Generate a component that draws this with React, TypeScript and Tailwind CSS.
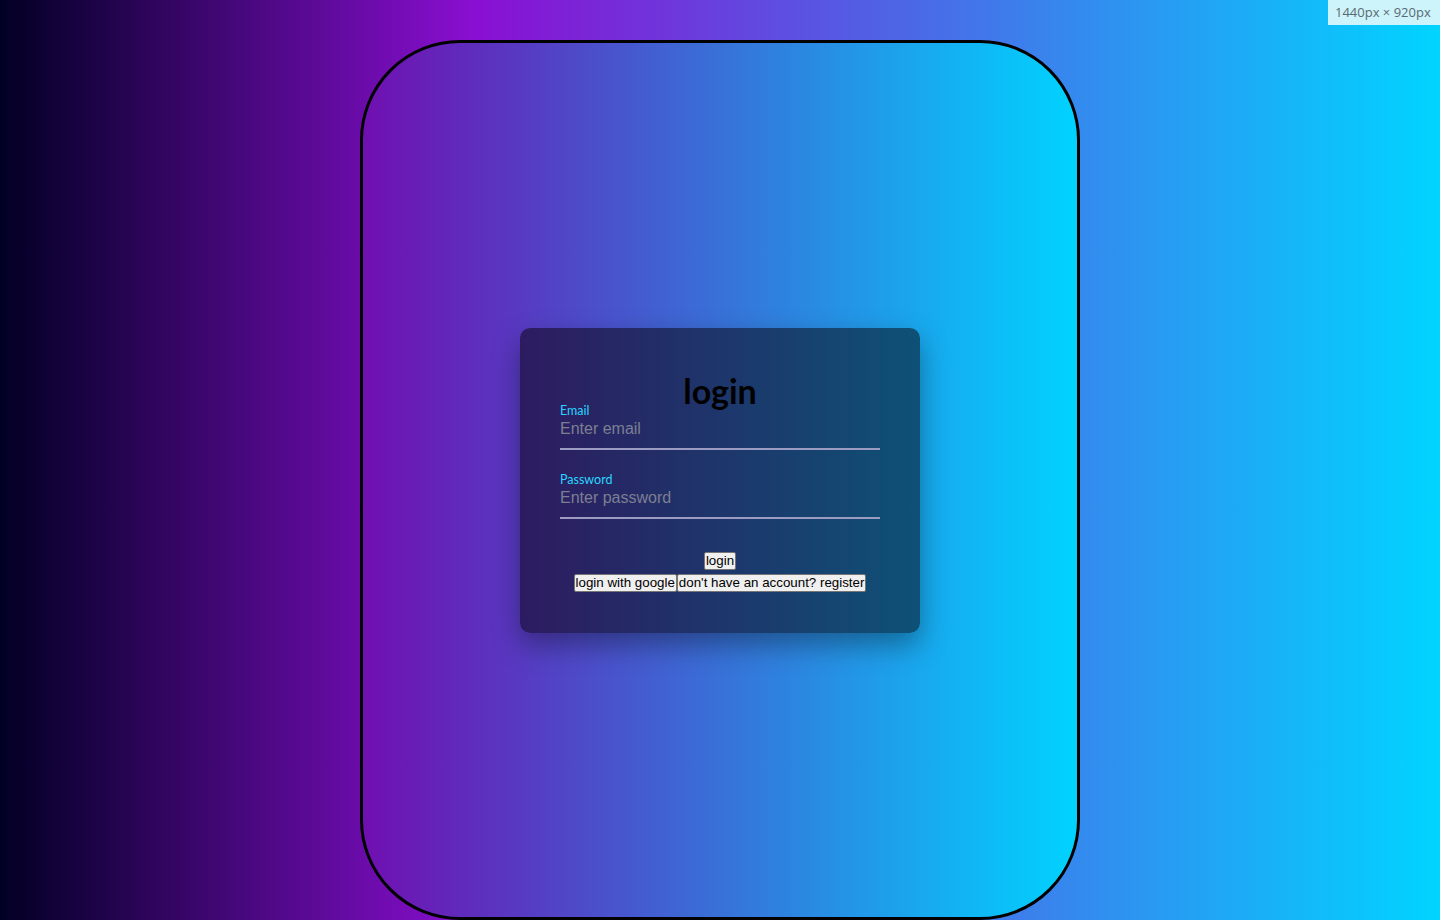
export default function App() {
  return (
    <div className="relative h-[920px] w-[1440px] overflow-hidden bg-[linear-gradient(90deg,#020024_0%,#8a0fd2_33%,#00d4ff_100%)] font-['Open_Sans',sans-serif]">
      <div className="mx-auto mt-[40px] flex h-[880px] w-[720px] items-center justify-center rounded-[100px] border-[3px] border-black bg-[linear-gradient(90deg,#700fb1_0%,#00d3ff_100%)]">
        <div className="flex w-[400px] flex-col rounded-[10px] bg-[linear-gradient(90deg,#2d1b60_0%,#0e5176_100%)] px-[40px] pb-[41px] pt-[45px] shadow-[0_12px_28px_rgba(0,0,0,0.35)]">
          <h1 className="mb-[-6px] text-center font-['Lato',sans-serif] text-[34px] font-bold leading-[36px] text-black">
            login
          </h1>

          <label className="font-['Lato',sans-serif] text-[12.5px] leading-[15px] text-[#2ad6ff]">Email</label>
          <input
            type="text"
            placeholder="Enter email"
            className="h-[32px] border-b-2 border-[#9c9cc2] bg-transparent pb-[7px] font-['Liberation_Sans',sans-serif] text-[16px] text-white outline-none placeholder:text-[#7c7f92]"
          />

          <label className="mt-[22px] font-['Lato',sans-serif] text-[12.5px] leading-[15px] text-[#2ad6ff]">Password</label>
          <input
            type="password"
            placeholder="Enter password"
            className="h-[32px] border-b-2 border-[#9c9cc2] bg-transparent pb-[7px] font-['Liberation_Sans',sans-serif] text-[16px] text-white outline-none placeholder:text-[#7c7f92]"
          />

          <div className="mt-[33px] flex flex-col items-center gap-[4px] font-['Liberation_Sans',sans-serif] text-[13.33px] leading-[16px] text-black">
            <button className="rounded-[2px] border border-[#767676] bg-[#f0f0f0] px-[1px]">login</button>
            <div className="flex">
              <button className="rounded-[2px] border border-[#767676] bg-[#f0f0f0] px-[1px]">login with google</button>
              <button className="rounded-[2px] border border-[#767676] bg-[#f0f0f0] px-[1px]">don't have an account? register</button>
            </div>
          </div>
        </div>
      </div>

      <div className="absolute right-0 top-0 h-[25px] w-[112px] bg-[#cdf3fb] pl-[7px] pt-[4px] font-['Open_Sans',sans-serif] text-[13px] leading-[17px] text-[#5a6a70]">
        1440px × 920px
      </div>
    </div>
  );
}
